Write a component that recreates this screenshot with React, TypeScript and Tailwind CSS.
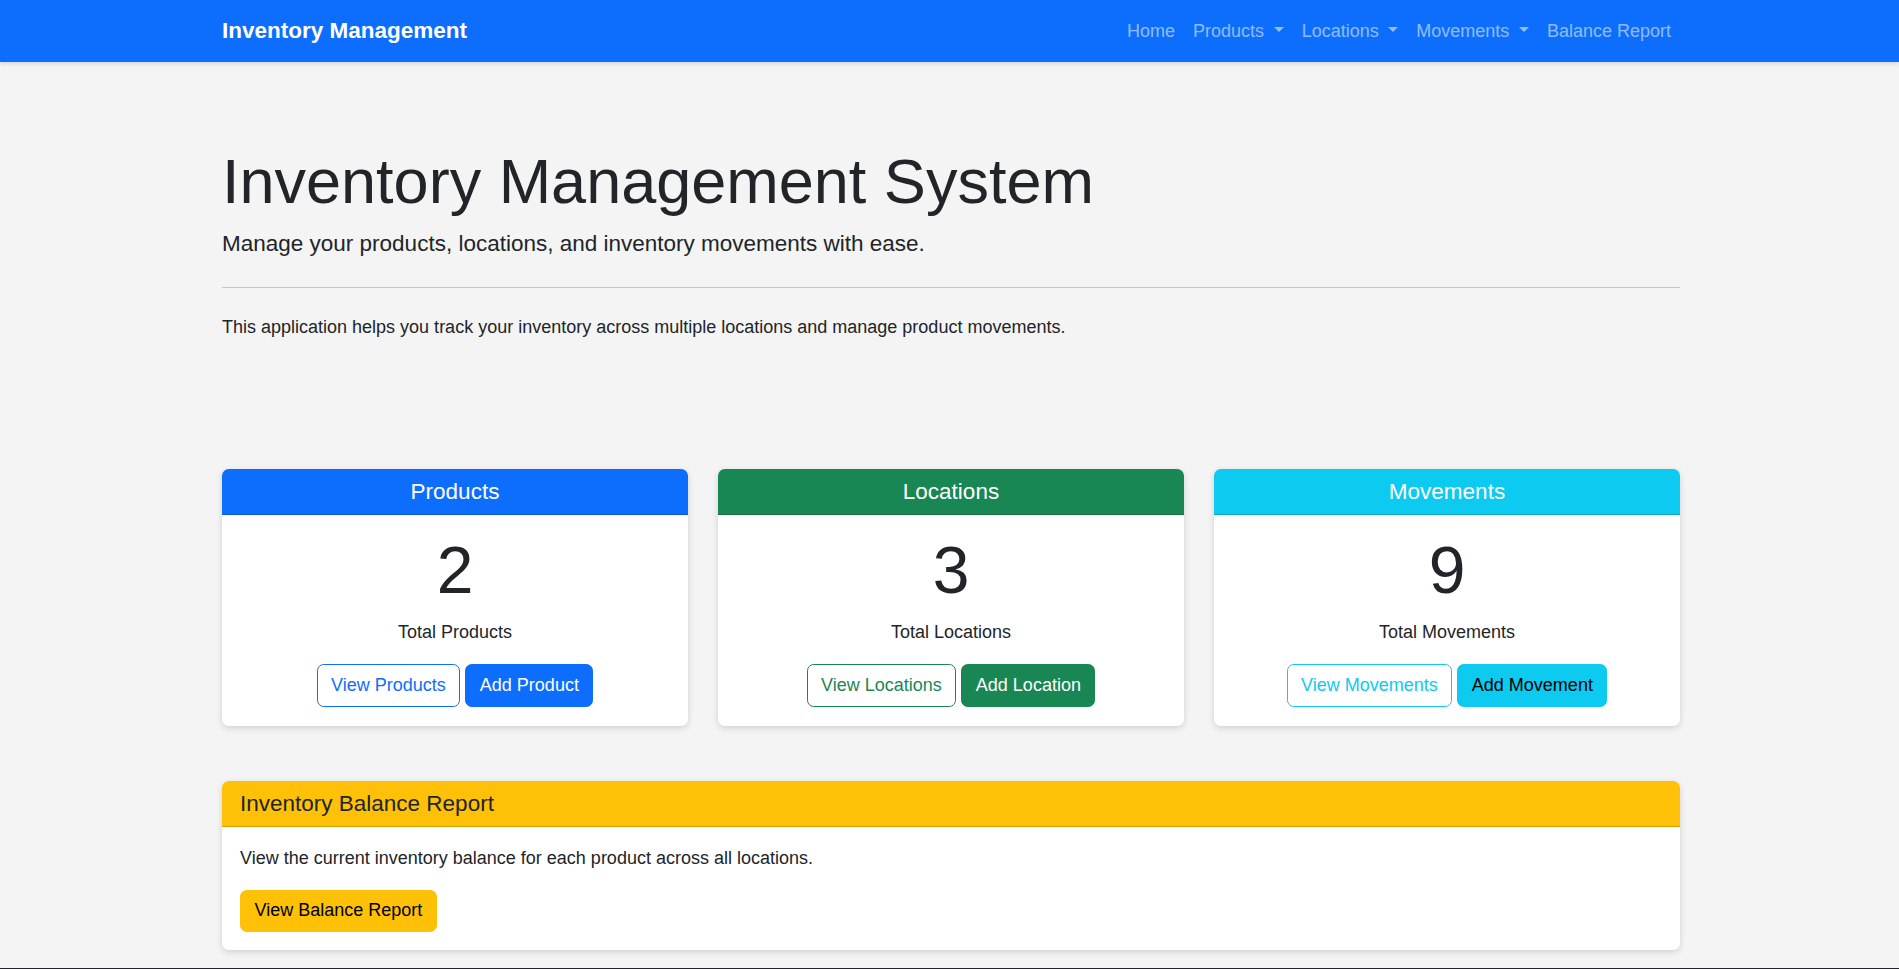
import React from "react";

const navLinks = [
  { label: "Home", caret: false },
  { label: "Products", caret: true },
  { label: "Locations", caret: true },
  { label: "Movements", caret: true },
  { label: "Balance Report", caret: false },
];

const stats = [
  {
    title: "Products",
    count: 2,
    label: "Total Products",
    view: "View Products",
    add: "Add Product",
    header: "bg-[#0d6efd] text-white",
    outline: "border-[#0d6efd] text-[#0d6efd]",
    solid: "border-[#0d6efd] bg-[#0d6efd] text-white",
  },
  {
    title: "Locations",
    count: 3,
    label: "Total Locations",
    view: "View Locations",
    add: "Add Location",
    header: "bg-[#198754] text-white",
    outline: "border-[#198754] text-[#198754]",
    solid: "border-[#198754] bg-[#198754] text-white",
  },
  {
    title: "Movements",
    count: 9,
    label: "Total Movements",
    view: "View Movements",
    add: "Add Movement",
    header: "bg-[#0dcaf0] text-white",
    outline: "border-[#0dcaf0] text-[#0dcaf0]",
    solid: "border-[#0dcaf0] bg-[#0dcaf0] text-black",
  },
];

function Caret() {
  return (
    <span className="ml-[9.6px] inline-block h-0 w-0 border-x-[5.4px] border-t-[5.4px] border-x-transparent border-t-current align-[0.255em]" />
  );
}

export default function App() {
  return (
    <div className="min-h-screen bg-[#f4f4f4] font-['Liberation_Sans',Arial,sans-serif] text-[18px] leading-[1.5] text-[#212529]">
      <nav className="relative z-10 h-[62px] bg-[#0d6efd] shadow-[0_2px_4px_rgba(0,0,0,0.12)]">
        <div className="mx-auto flex h-full w-[1461px] items-center justify-between pl-[3px]">
          <span className="text-[22.5px] font-bold text-white">Inventory Management</span>
          <ul className="flex">
            {navLinks.map((link) => (
              <li key={link.label} className="px-[9px] text-[rgba(255,255,255,0.55)]">
                {link.label}
                {link.caret && <Caret />}
              </li>
            ))}
          </ul>
        </div>
      </nav>

      <main className="mx-auto w-[1461px] pl-[3px]">
        <section className="pt-[82px]">
          <h1 className="mb-[7px] text-[63px] leading-[1.2] font-light">
            Inventory Management System
          </h1>
          <p className="text-[22.5px] leading-[1.5]">
            Manage your products, locations, and inventory movements with ease.
          </p>
          <hr className="mt-[27px] mb-[26px] border-0 border-t border-[#c6c6c6]" />
          <p>
            This application helps you track your inventory across multiple locations and manage
            product movements.
          </p>
        </section>

        <div className="mt-[128px] grid grid-cols-3 gap-[30px]">
          {stats.map((s) => (
            <div
              key={s.title}
              className="overflow-hidden rounded-[6.75px] bg-white shadow-[0_2px_6px_rgba(0,0,0,0.15)]"
            >
              <div
                className={`flex h-[46px] items-center justify-center border-b border-black/[0.175] text-[22.5px] leading-[1.2] ${s.header}`}
              >
                {s.title}
              </div>
              <div className="pt-[16px] pb-[19px] text-center">
                <div className="mb-[8px] text-[66px] leading-[1.2] font-light">{s.count}</div>
                <p className="mb-[18px]">{s.label}</p>
                <div className="flex justify-center gap-[5px]">
                  <span
                    className={`flex h-[43px] items-center rounded-[6.75px] border bg-white px-[13.5px] ${s.outline}`}
                  >
                    {s.view}
                  </span>
                  <span
                    className={`flex h-[43px] items-center rounded-[6.75px] border px-[13.5px] ${s.solid}`}
                  >
                    {s.add}
                  </span>
                </div>
              </div>
            </div>
          ))}
        </div>

        <div className="mt-[55px] overflow-hidden rounded-[6.75px] bg-white shadow-[0_2px_6px_rgba(0,0,0,0.15)]">
          <div className="flex h-[46px] items-center border-b border-black/[0.175] bg-[#ffc107] px-[18px] text-[22.5px] leading-[1.2]">
            Inventory Balance Report
          </div>
          <div className="p-[18px]">
            <p className="mb-[18px]">
              View the current inventory balance for each product across all locations.
            </p>
            <span className="inline-flex h-[42px] items-center rounded-[6.75px] border border-[#ffc107] bg-[#ffc107] px-[13.5px] text-black">
              View Balance Report
            </span>
          </div>
        </div>
      </main>

      <footer className="mt-[18px] h-[60px] bg-[#212529]" />
    </div>
  );
}
